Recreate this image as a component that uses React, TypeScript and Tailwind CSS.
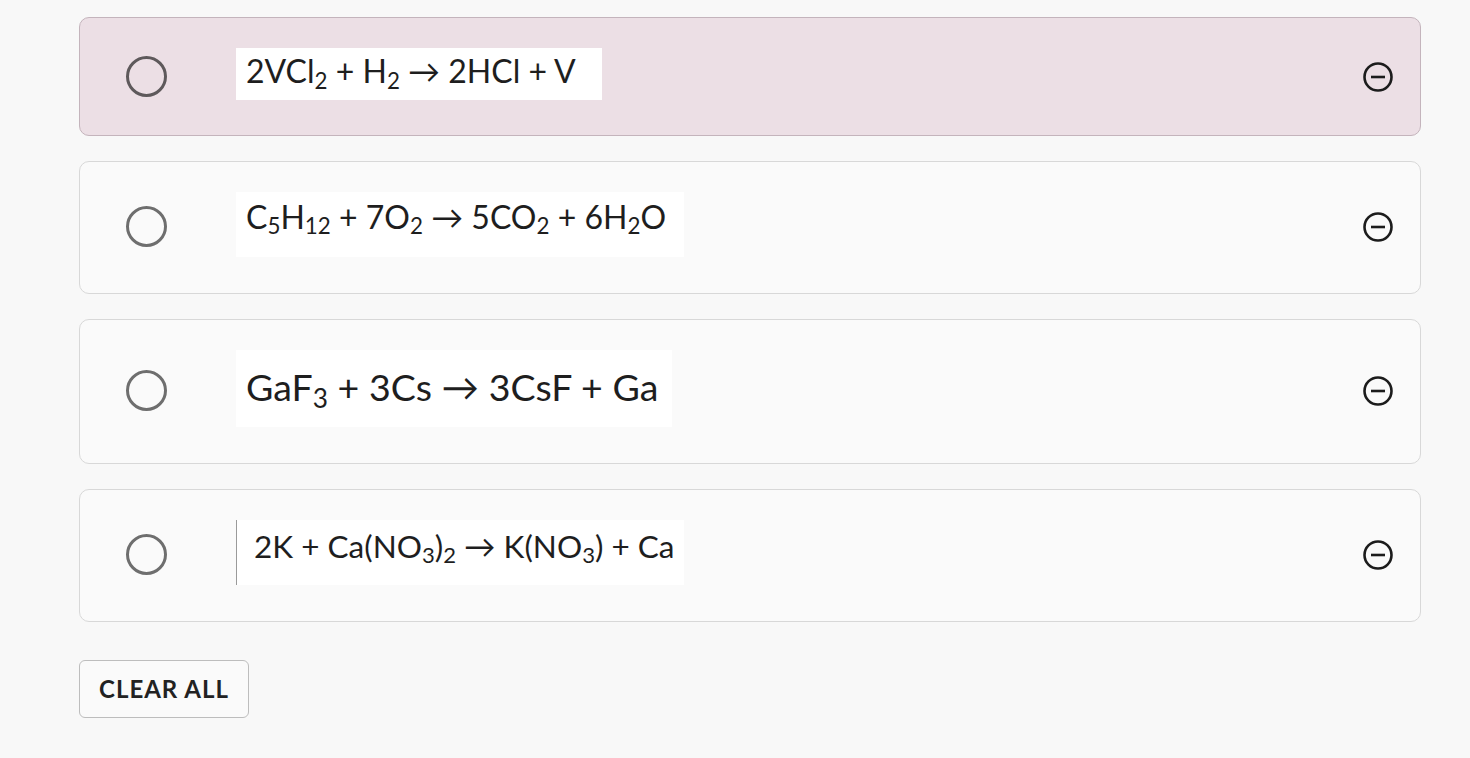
import React from 'react'

type Option = {
    id: number
    eq: React.ReactNode
    boxW: string
    boxH: string
    text: string
    bar?: boolean
}

const Sub = ({ children }: { children: React.ReactNode }) => (
    <sub className="text-[0.7em] relative top-[0.26em] align-baseline leading-none">{children}</sub>
)

const options: Option[] = [
    {
        id: 1,
        boxW: 'w-[366px]',
        boxH: 'h-[52px]',
        text: 'text-[32px] pl-[10px] pb-[6px]',
        eq: (
            <>
                2VCl<Sub>2</Sub> + H<Sub>2</Sub> → 2HCl + V
            </>
        ),
    },
    {
        id: 2,
        boxW: 'w-[448px]',
        boxH: 'h-[65px]',
        text: 'text-[32px] pl-[10px] pb-[16px]',
        eq: (
            <>
                C<Sub>5</Sub>H<Sub>12</Sub> + 7O<Sub>2</Sub> → 5CO<Sub>2</Sub> + 6H<Sub>2</Sub>O
            </>
        ),
    },
    {
        id: 3,
        boxW: 'w-[436px]',
        boxH: 'h-[77px]',
        text: 'text-[37.5px] pl-[10px] pb-[4px]',
        eq: (
            <>
                GaF<Sub>3</Sub> + 3Cs → 3CsF + Ga
            </>
        ),
    },
    {
        id: 4,
        boxW: 'w-[448px]',
        boxH: 'h-[65px]',
        text: 'text-[31.5px] pl-[17px] pb-[12px]',
        bar: true,
        eq: (
            <>
                2K + Ca(NO<Sub>3</Sub>)<Sub>2</Sub> → K(NO<Sub>3</Sub>) + Ca
            </>
        ),
    },
]

function MinusCircle() {
    return (
        <svg width="32" height="32" viewBox="0 0 32 32" fill="none">
            <circle cx="16" cy="16" r="13.5" stroke="#1c1c1c" strokeWidth="2.6" />
            <line x1="9" y1="16" x2="23" y2="16" stroke="#1c1c1c" strokeWidth="2.6" />
        </svg>
    )
}

export default function App() {
    return (
        <div className="min-h-screen bg-[#f8f8f8] pt-[17px] font-['Lato',sans-serif]">
            <div className="ml-[79px] w-[1342px] flex flex-col gap-[25px]">
                {options.map((o) => (
                    <div
                        key={o.id}
                        className={
                            o.id === 1
                                ? 'flex items-center rounded-[10px] border border-[#c4b4bc] bg-[#ecdfe5] pl-[46px] pr-[26px] pt-[30px] pb-[35px]'
                                : 'flex items-center rounded-[10px] border border-[#d8d8d8] bg-[#fafafa] pl-[46px] pr-[26px] pt-[30px] pb-[36px]'
                        }
                    >
                        <span
                            className={
                                o.id === 1
                                    ? 'w-[41px] h-[41px] rounded-full border-[3px] border-[#5e595b] shrink-0 mt-[4px]'
                                    : 'w-[41px] h-[41px] rounded-full border-[3px] border-[#6e6e6e] shrink-0 mt-[4px]'
                            }
                        />
                        <div
                            className={`ml-[69px] ${o.boxW} ${o.boxH} bg-white flex items-center text-[#1e1e1e] whitespace-nowrap ${o.text} ${
                                o.bar ? 'border-l border-[#9a9a9a]' : ''
                            }`}
                        >
                            <span className="leading-none">{o.eq}</span>
                        </div>
                        <div className="ml-auto mt-[5px]">
                            <MinusCircle />
                        </div>
                    </div>
                ))}
            </div>
            <button className="ml-[79px] mt-[38px] w-[170px] h-[58px] rounded-[6px] border border-[#bdbdbd] bg-[#fafafa] text-[24px] font-bold text-[#222] tracking-[1px]">
                CLEAR ALL
            </button>
        </div>
    )
}
